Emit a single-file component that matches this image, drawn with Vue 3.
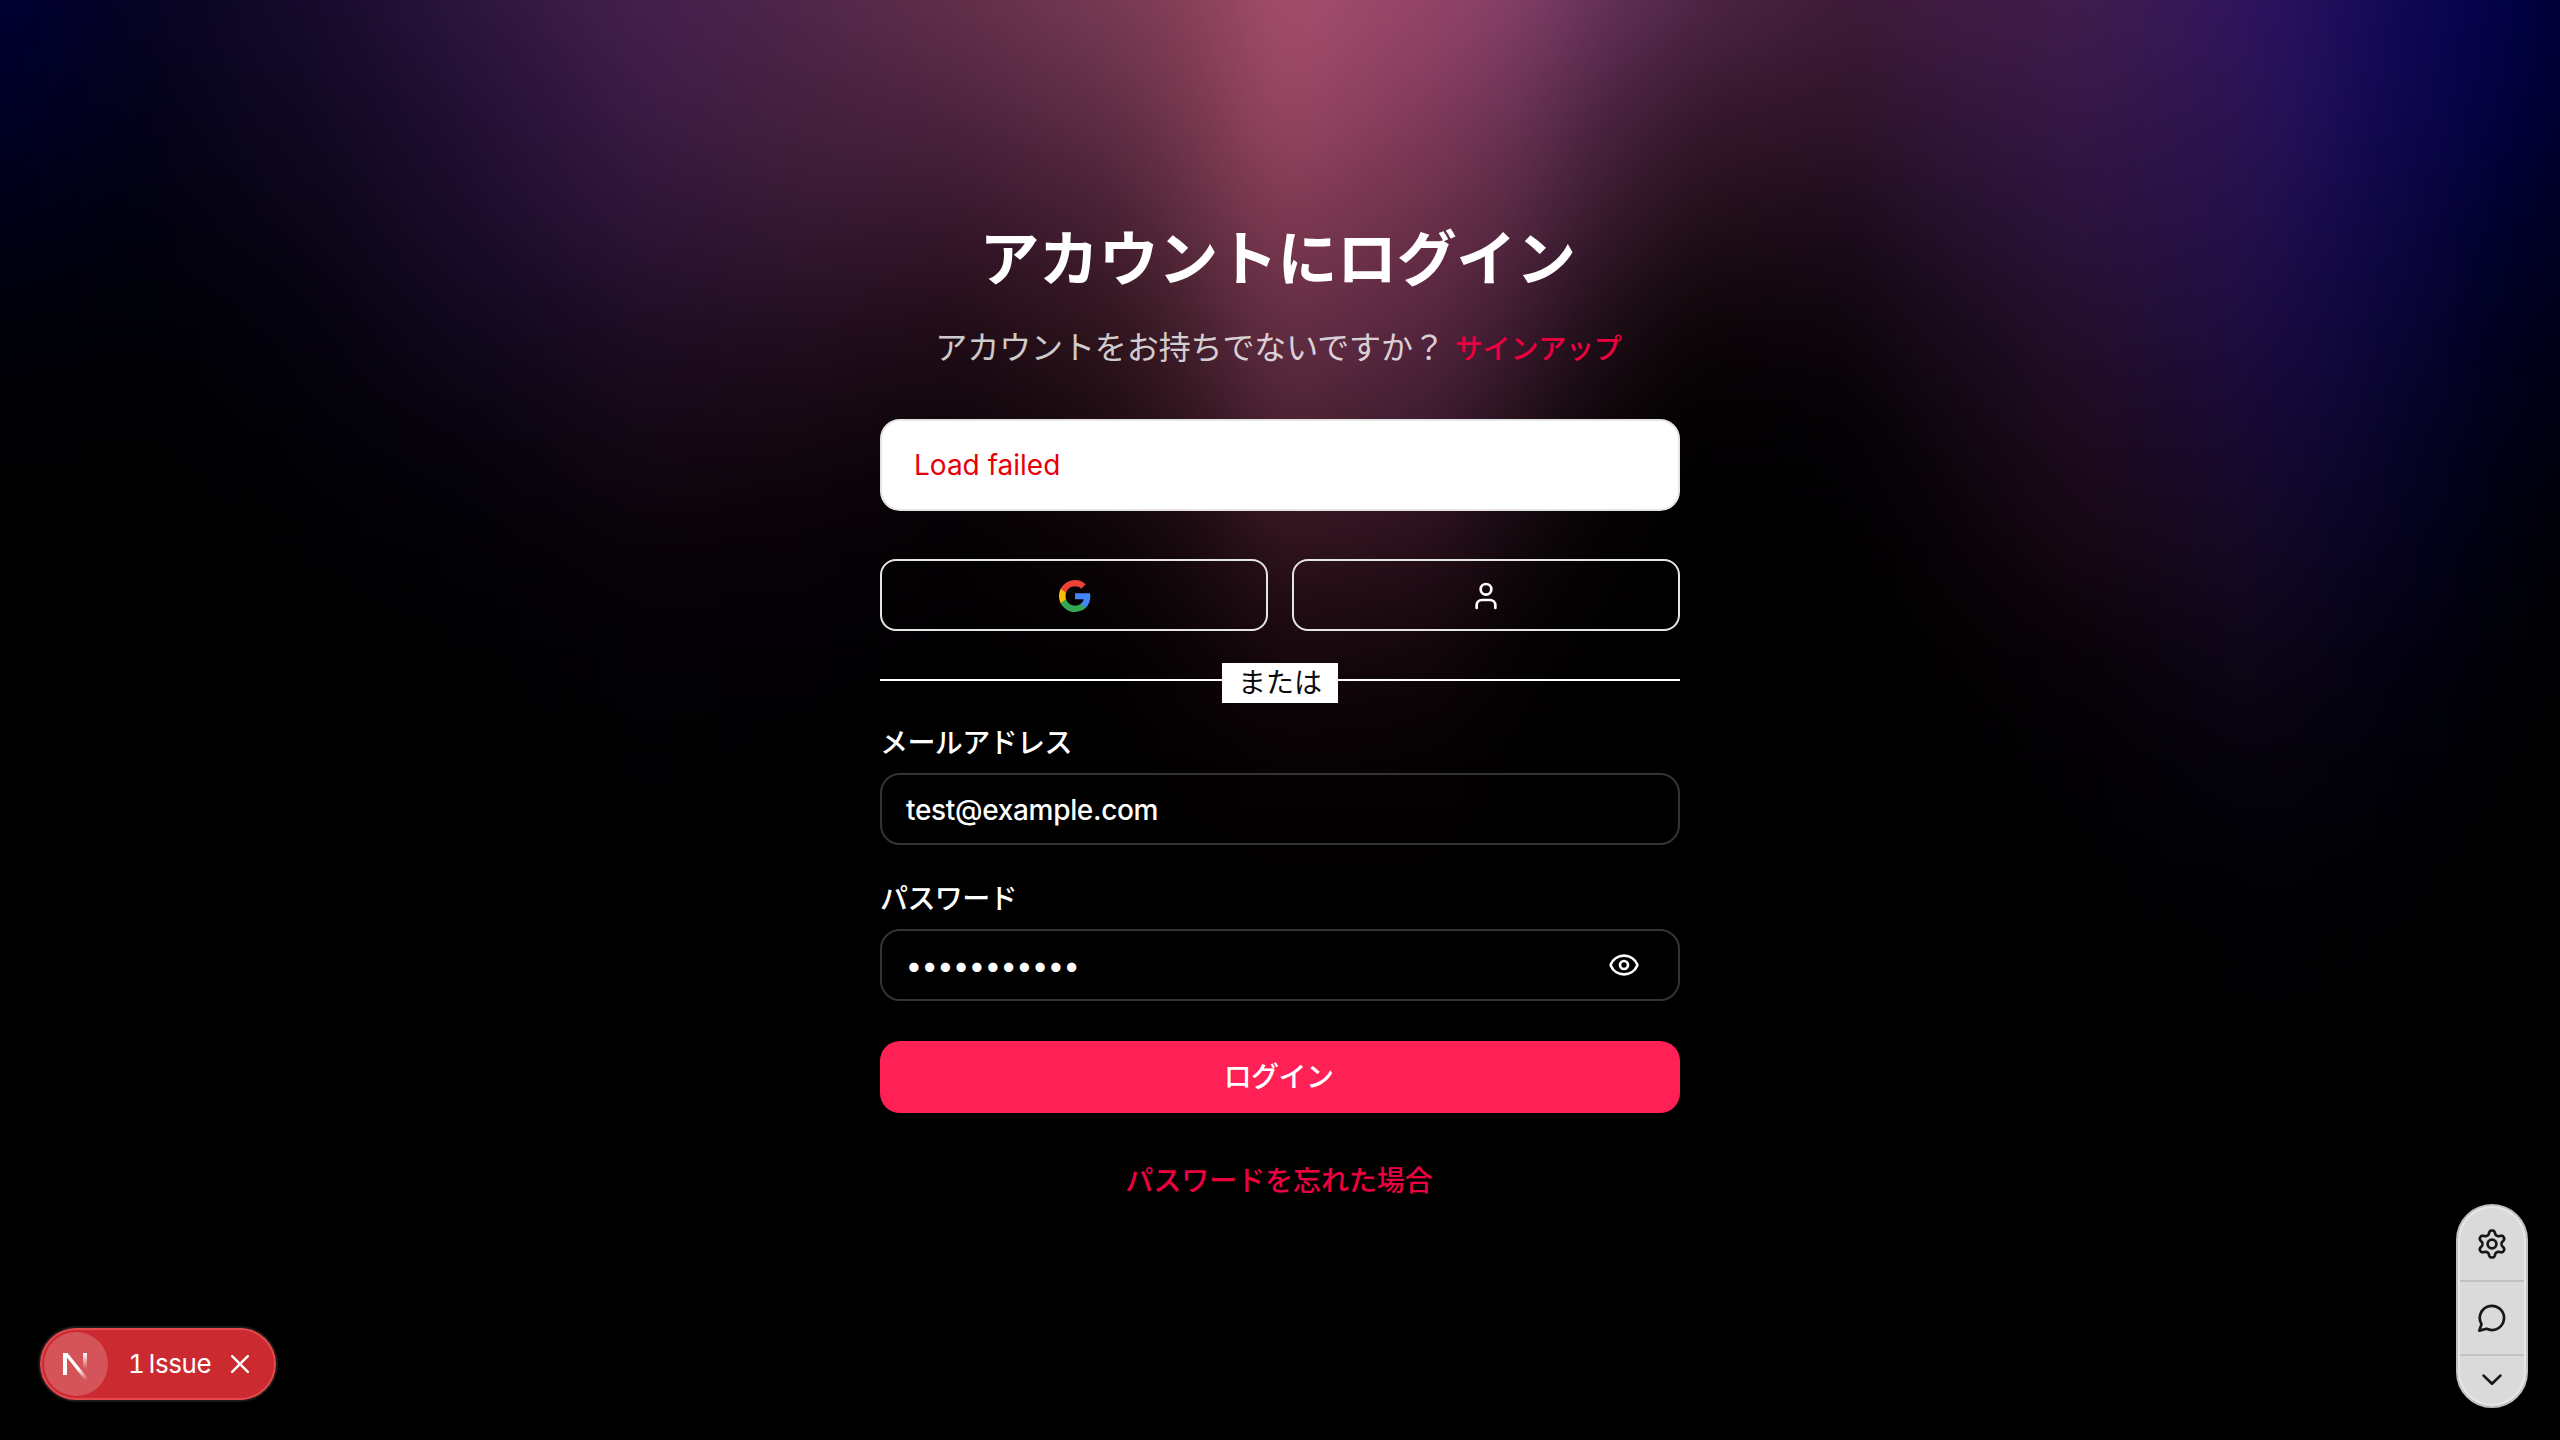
<script setup>
import { ref } from 'vue'

const email = ref('test@example.com')
const maskedPassword = '•'.repeat(11)

// Aurora backdrop: horizontal colour rows that fade into each other downwards.
const bleed = 90
const rowHeight = 107
const columns = [0, 160, 320, 480, 640, 800, 960, 1120, 1200, 1280, 1440, 1520, 1600, 1700, 1850, 1920, 2080, 2240, 2300, 2400, 2500, 2560]
const palette = [
  '000034 080423 180b2e 2f1740 45204f 50264b 63304a 7a3b55 8a4159 a64f6c 944468 843f67 65325a 4f2646 3d1b38 401b40 3f1d4c 321560 26115e 110853 02024a 000034',
  '000028 05031a 120924 251036 3b1b45 46213f 4f2440 623047 7b394f 9b4863 80395c 6a3355 4d2443 37182e 301529 321638 371848 2d1452 22105a 0f0750 020140 000030',
  '000018 030210 0c0619 1d0d2d 2f1538 361a33 38182d 4a2136 643044 823b54 6a3048 552842 371a2d 231019 1e0c1d 241029 2c133f 26104a 1c0d4e 0c0642 010130 000024',
  '00000a 010107 060310 120820 200e26 240f22 220d18 32161f 4a2231 683047 552640 3c1b30 1f0e18 0d0508 0f060e 180a19 25102e 1f0d42 170a42 090538 010122 00001a',
  '000003 000002 030208 090410 150816 150811 0f050a 1f0d13 321520 4f2436 3c1b2d 22101a 0d0508 020102 040205 0d050d 200c20 190a34 120836 07042a 010118 000010',
  '000000 000000 010103 030207 0a040a 090308 040103 0e0508 1c0b10 33151f 2a101c 12080d 050203 000000 010001 060206 180814 160926 0f0728 060320 010110 000006',
  '000000 000000 000000 010002 040206 030104 010001 040103 0d0407 1b0a10 14070c 050203 010000 000000 000000 020101 0a0309 0f061a 0b0519 040214 010108 000002',
  '000000 000000 000000 000000 010103 010001 000000 010000 040102 080204 060204 010001 000000 000000 000000 000000 030104 07040f 06030d 02010a 000003 000000',
  '000000 000000 000000 000000 000000 000000 000000 000000 010000 020001 020001 000000 000000 000000 000000 000000 010001 020207 020207 010004 000000 000000',
  '000000 000000 000000 000000 000000 000000 000000 000000 000000 000000 000000 000000 000000 000000 000000 000000 000000 010103 010103 000001 000000 000000',
  '000000 000000',
]
const auroraRows = palette.map((row, i) => {
  const colors = row.split(' ')
  const stops = colors.map((c, k) => `#${c} ${columns[k] + bleed}px`).join(', ')
  const style = {
    top: i === 0 ? '0px' : `${bleed + (i - 1) * rowHeight}px`,
    backgroundImage: `linear-gradient(90deg, ${stops})`,
  }
  if (i > 0) style.maskImage = `linear-gradient(180deg, transparent 0px, #000 ${rowHeight}px)`
  return style
})

// Six-lobed cog outline on a 30 x 30 canvas.
const gearPath = (() => {
  const points = []
  for (let i = 0; i < 180; i++) {
    const a = (i / 180) * Math.PI * 2
    const wave = Math.tanh(1.5 * Math.cos(6 * (a - Math.PI / 2)) - 0.1) / Math.tanh(1.5)
    const r = 11.6 + 1.95 * wave
    points.push(`${(15 + r * Math.cos(a)).toFixed(2)} ${(15 + r * Math.sin(a)).toFixed(2)}`)
  }
  return `M${points.join('L')}Z`
})()
</script>

<template>
  <div class="page">
    <div class="aurora" aria-hidden="true">
      <div v-for="(row, i) in auroraRows" :key="i" class="aurora-row" :style="row"></div>
    </div>

    <main class="panel">
      <h1 class="title">アカウントにログイン</h1>
      <p class="subtitle">
        <span class="question">アカウントをお持ちでないですか？</span>
        <a class="link">サインアップ</a>
      </p>

      <div class="alert">Load failed</div>

      <div class="providers">
        <button class="provider google" aria-label="Google">
          <svg width="32" height="32" viewBox="0 0 24 24">
            <path fill="#4285F4" d="M23.49 12.27c0-.79-.07-1.54-.19-2.27H12v4.51h6.47c-.29 1.48-1.14 2.73-2.4 3.58v3h3.86c2.26-2.09 3.56-5.17 3.56-8.82z" />
            <path fill="#34A853" d="M12 24c3.24 0 5.95-1.08 7.93-2.91l-3.86-3c-1.08.72-2.45 1.16-4.07 1.16-3.13 0-5.78-2.11-6.73-4.96H1.29v3.09C3.26 21.3 7.31 24 12 24z" />
            <path fill="#FBBC05" d="M5.27 14.29c-.25-.72-.38-1.49-.38-2.29s.14-1.57.38-2.29V6.62H1.29C.47 8.24 0 10.06 0 12s.47 3.76 1.29 5.38l3.98-3.09z" />
            <path fill="#EA4335" d="M12 4.75c1.77 0 3.35.61 4.6 1.8l3.42-3.42C17.95 1.19 15.24 0 12 0 7.31 0 3.26 2.7 1.29 6.62l3.98 3.09C6.22 6.86 8.87 4.75 12 4.75z" />
          </svg>
        </button>
        <button class="provider" aria-label="Guest">
          <svg class="stroke-icon" width="32" height="32" viewBox="0 0 24 24">
            <circle cx="12" cy="7" r="4" />
            <path d="M19 21v-2a4 4 0 0 0-4-4H9a4 4 0 0 0-4 4v2" />
          </svg>
        </button>
      </div>

      <div class="divider">
        <span class="rule"></span>
        <span class="divider-label">または</span>
        <span class="rule"></span>
      </div>

      <label class="label">メールアドレス</label>
      <div class="field"><span class="value">{{ email }}</span></div>

      <label class="label second">パスワード</label>
      <div class="field">
        <span class="dots">{{ maskedPassword }}</span>
        <svg class="stroke-icon" width="32" height="32" viewBox="0 0 24 24">
          <path d="M2.062 12.348a1 1 0 0 1 0-.696 10.75 10.75 0 0 1 19.876 0 1 1 0 0 1 0 .696 10.75 10.75 0 0 1-19.876 0" />
          <circle cx="12" cy="12" r="3" />
        </svg>
      </div>

      <button class="submit">ログイン</button>
      <a class="link forgot">パスワードを忘れた場合</a>
    </main>

    <div class="issue-badge">
      <span class="logo">
        <svg width="64" height="64" viewBox="0 0 64 64" fill="none">
          <defs>
            <linearGradient id="diag" x1="36" y1="36" x2="44" y2="47" gradientUnits="userSpaceOnUse">
              <stop stop-color="#fff" />
              <stop offset="1" stop-color="#fff" stop-opacity="0" />
            </linearGradient>
            <linearGradient id="stem" x1="41" y1="21" x2="41" y2="37" gradientUnits="userSpaceOnUse">
              <stop stop-color="#fff" />
              <stop offset="1" stop-color="#fff" stop-opacity="0" />
            </linearGradient>
          </defs>
          <path d="M19 43V21H23.6L44.4 47L41.6 49L23 25.6V43Z" fill="url(#diag)" />
          <path d="M39 21h4v16h-4z" fill="url(#stem)" />
        </svg>
      </span>
      <span class="issue-text"><span class="count">1</span>Issue</span>
      <svg class="close" width="18" height="18" viewBox="0 0 18 18">
        <path d="M1.2 1.2L16.8 16.8M16.8 1.2L1.2 16.8" />
      </svg>
    </div>

    <div class="toolbar">
      <span class="tool">
        <svg width="30" height="30" viewBox="0 0 30 30">
          <path :d="gearPath" />
          <circle cx="15" cy="15" r="4.4" />
        </svg>
      </span>
      <span class="tool">
        <svg width="30" height="30" viewBox="0 0 30 30">
          <path d="M2.3 27.6L4.5 21.1A12.1 12.1 0 1 1 9.6 25.8Z" />
        </svg>
      </span>
      <span class="tool last">
        <svg width="20" height="12" viewBox="0 0 20 12">
          <path d="M1.6 1.6L10 9.8L18.4 1.6" />
        </svg>
      </span>
    </div>
  </div>
</template>

<style>
html,
body {
  background: #000;
}
</style>

<style scoped>
.page {
  position: relative;
  width: 2560px;
  height: 1440px;
  overflow: hidden;
  background: #000;
  color: #fff;
  font-family: Inter, "Noto Sans CJK JP", sans-serif;
  font-size: 28px;
}
.aurora {
  position: absolute;
  inset: -90px;
  background: #000;
  filter: blur(30px);
}
.aurora-row {
  position: absolute;
  left: 0;
  right: 0;
  bottom: 0;
}
.panel {
  position: relative;
  display: flex;
  flex-direction: column;
  width: 800px;
  margin: 0 auto;
  padding-top: 223px;
}
.title {
  margin: 0 5px 0 0;
  height: 72px;
  line-height: 72px;
  font-size: 60px;
  font-weight: 700;
  letter-spacing: -0.4px;
  text-align: center;
  white-space: nowrap;
}
.subtitle {
  display: flex;
  justify-content: center;
  align-items: baseline;
  margin: 29px 3px 0 0;
  height: 48px;
  line-height: 48px;
  white-space: nowrap;
}
.question {
  margin-right: 10px;
  font-size: 32px;
  letter-spacing: -0.1px;
  color: rgba(255, 255, 255, 0.8);
}
.link {
  color: #ec003f;
  font-weight: 500;
  letter-spacing: -0.2px;
}
.alert {
  box-sizing: border-box;
  height: 92px;
  margin-top: 47px;
  padding: 0 32px;
  border: 2px solid #e5e5e5;
  border-radius: 20px;
  background: #fff;
  color: #e7000b;
  line-height: 88px;
}
.providers {
  display: flex;
  gap: 24px;
  margin-top: 48px;
}
.provider {
  display: flex;
  flex: 1;
  align-items: center;
  justify-content: center;
  box-sizing: border-box;
  height: 72px;
  padding: 2px 0 0;
  border: 2px solid #e5e5e5;
  border-radius: 16px;
  background: transparent;
  color: #fff;
}
.provider.google svg {
  margin-left: 1px;
}
.stroke-icon {
  fill: none;
  stroke: #fff;
  stroke-width: 2;
  stroke-linecap: round;
  stroke-linejoin: round;
}
.divider {
  display: flex;
  height: 40px;
  margin-top: 32px;
}
.rule {
  flex: 1;
  height: 2px;
  margin-top: 16px;
  background: #fff;
}
.divider-label {
  width: 116px;
  background: #fff;
  color: #0a0a0a;
  line-height: 41px;
  text-align: center;
}
.label {
  height: 28px;
  margin-top: 26px;
  font-weight: 500;
  letter-spacing: -0.6px;
  line-height: 28px;
}
.second {
  margin-top: 40px;
}
.field {
  display: flex;
  align-items: center;
  box-sizing: border-box;
  height: 72px;
  margin-top: 16px;
  padding: 0 38px 0 24px;
  border: 2px solid #333;
  border-radius: 20px;
  font-weight: 500;
}
.value {
  padding-top: 2px;
  letter-spacing: -0.32px;
}
.dots {
  flex: 1;
  padding-top: 2px;
  font-size: 29.5px;
  letter-spacing: 0.05px;
  line-height: 1;
}
.submit {
  height: 72px;
  margin-top: 40px;
  padding: 0 3px 5px 0;
  border: 0;
  border-radius: 20px;
  background: #ff2056;
  color: #fff;
  font: inherit;
  font-weight: 500;
  letter-spacing: -0.6px;
}
.forgot {
  margin: 48px 2px 0 0;
  line-height: 40px;
  text-align: center;
  letter-spacing: -0.05px;
}
.issue-badge {
  position: absolute;
  left: 40px;
  top: 1328px;
  display: flex;
  align-items: center;
  box-sizing: border-box;
  width: 236px;
  height: 72px;
  padding-left: 2px;
  border: 2px solid #e5484d;
  border-radius: 36px;
  background: #ca2a30;
  box-shadow: 0 0 0 2px #1b1b1b;
}
.logo {
  width: 64px;
  height: 64px;
  border-radius: 50%;
  background: rgba(255, 255, 255, 0.2);
}
.issue-text {
  width: 85px;
  margin-left: 20px;
  padding-bottom: 2px;
  font-size: 26px;
  letter-spacing: -0.45px;
  white-space: nowrap;
}
.count {
  margin-right: 4px;
  font-feature-settings: "tnum";
}
.close {
  margin-left: 18px;
  fill: none;
  stroke: #fff;
  stroke-width: 2.4;
  stroke-linecap: round;
}
.toolbar {
  position: absolute;
  left: 2456px;
  top: 1204px;
  display: flex;
  flex-direction: column;
  box-sizing: border-box;
  width: 72px;
  height: 204px;
  padding: 0 2px;
  border: 2px solid #c0c2c2;
  border-radius: 36px;
  background: #dadada;
  box-shadow: inset 0 0 0 2px #e6e8e8;
}
.tool {
  display: flex;
  align-items: center;
  justify-content: center;
  box-sizing: border-box;
  height: 74px;
  border-bottom: 2px solid #c2c2c2;
}
.tool:first-child {
  height: 76px;
  padding-top: 2px;
}
.tool.last {
  height: 50px;
  padding-bottom: 2px;
  border-bottom: 0;
}
.tool svg {
  fill: none;
  stroke: #171717;
  stroke-width: 2.7;
  stroke-linecap: round;
  stroke-linejoin: round;
}
</style>
